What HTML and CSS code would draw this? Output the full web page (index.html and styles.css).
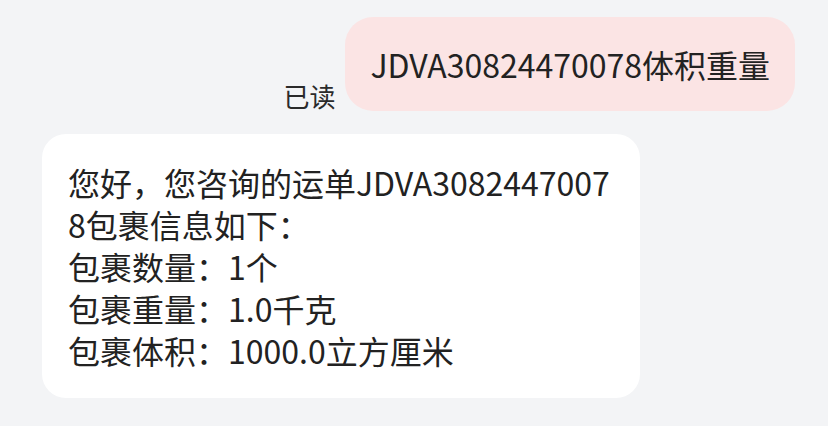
FILE: index.html
```html
<!DOCTYPE html>
<html lang="zh-CN">
<head>
<meta charset="utf-8">
<title>Chat</title>
<link rel="stylesheet" href="styles.css">
</head>
<body>
<div class="chat">
  <div class="row row-out">
    <span class="read">已读</span>
    <div class="bubble bubble-out">JDVA30824470078体积重量</div>
  </div>
  <div class="row row-in">
    <div class="bubble bubble-in">您好，您咨询的运单JDVA30824470078包裹信息如下：<br>包裹数量：1个<br>包裹重量：1.0千克<br>包裹体积：1000.0立方厘米</div>
  </div>
</div>
</body>
</html>
```
FILE: styles.css
```css
html, body {
  margin: 0;
  padding: 0;
  background: #f3f4f6;
}
body {
  font-family: "Noto Sans CJK SC", "Noto Sans", sans-serif;
  color: #222222;
}
.chat {
  display: flex;
  flex-direction: column;
  gap: 23px;
  padding: 17px 33px 0 42px;
}
.row {
  display: flex;
}
.row-out {
  justify-content: flex-end;
  align-items: flex-end;
  gap: 10px;
}
.read {
  font-size: 26px;
  line-height: 30px;
  color: #2a2a2a;
}
.bubble {
  font-size: 32px;
  line-height: 42px;
}
.bubble-out {
  background: #fbe4e4;
  border-radius: 28px;
  padding: 26px 25px;
}
.bubble-in {
  background: #ffffff;
  border-radius: 24px;
  padding: 27px 26px;
  width: 546px;
  word-break: break-all;
}
```
